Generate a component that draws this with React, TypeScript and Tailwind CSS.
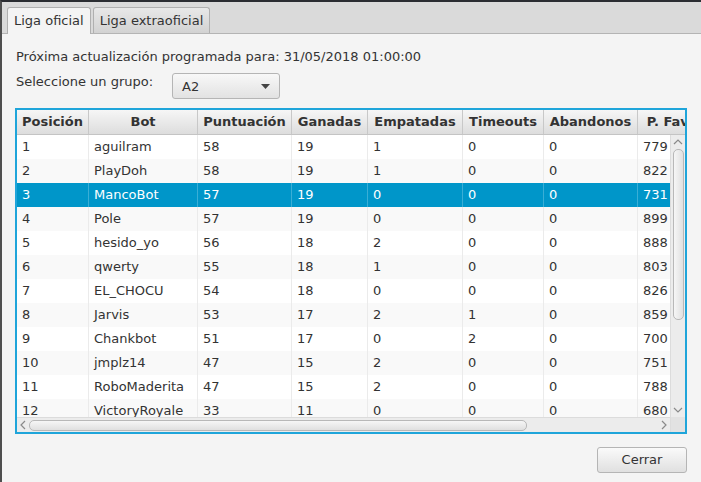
import React from 'react'

interface IFila {
  pos: number
  bot: string
  puntos: number
  ganadas: number
  empatadas: number
  timeouts: number
  abandonos: number
  favor: number
}

const filas: IFila[] = [
  { pos: 1, bot: 'aguilram', puntos: 58, ganadas: 19, empatadas: 1, timeouts: 0, abandonos: 0, favor: 779 },
  { pos: 2, bot: 'PlayDoh', puntos: 58, ganadas: 19, empatadas: 1, timeouts: 0, abandonos: 0, favor: 822 },
  { pos: 3, bot: 'MancoBot', puntos: 57, ganadas: 19, empatadas: 0, timeouts: 0, abandonos: 0, favor: 731 },
  { pos: 4, bot: 'Pole', puntos: 57, ganadas: 19, empatadas: 0, timeouts: 0, abandonos: 0, favor: 899 },
  { pos: 5, bot: 'hesido_yo', puntos: 56, ganadas: 18, empatadas: 2, timeouts: 0, abandonos: 0, favor: 888 },
  { pos: 6, bot: 'qwerty', puntos: 55, ganadas: 18, empatadas: 1, timeouts: 0, abandonos: 0, favor: 803 },
  { pos: 7, bot: 'EL_CHOCU', puntos: 54, ganadas: 18, empatadas: 0, timeouts: 0, abandonos: 0, favor: 826 },
  { pos: 8, bot: 'Jarvis', puntos: 53, ganadas: 17, empatadas: 2, timeouts: 1, abandonos: 0, favor: 859 },
  { pos: 9, bot: 'Chankbot', puntos: 51, ganadas: 17, empatadas: 0, timeouts: 2, abandonos: 0, favor: 700 },
  { pos: 10, bot: 'jmplz14', puntos: 47, ganadas: 15, empatadas: 2, timeouts: 0, abandonos: 0, favor: 751 },
  { pos: 11, bot: 'RoboMaderita', puntos: 47, ganadas: 15, empatadas: 2, timeouts: 0, abandonos: 0, favor: 788 },
  { pos: 12, bot: 'VictoryRoyale', puntos: 33, ganadas: 11, empatadas: 0, timeouts: 0, abandonos: 0, favor: 680 },
]

const columnas = [
  { titulo: 'Posición', w: 'w-[72px]' },
  { titulo: 'Bot', w: 'w-[109px]' },
  { titulo: 'Puntuación', w: 'w-[94px]' },
  { titulo: 'Ganadas', w: 'w-[76px]' },
  { titulo: 'Empatadas', w: 'w-[95px]' },
  { titulo: 'Timeouts', w: 'w-[81px]' },
  { titulo: 'Abandonos', w: 'w-[94px]' },
  { titulo: 'P. Favor', w: 'w-[76px]' },
]

const Chevron = ({ dir }: { dir: 'up' | 'down' | 'left' | 'right' }) => {
  const pts = {
    up: '1,6 5,2 9,6',
    down: '1,2 5,6 9,2',
    left: '6,1 2,5 6,9',
    right: '2,1 6,5 2,9',
  }[dir]
  const vertical = dir === 'up' || dir === 'down'
  return (
    <svg width={vertical ? 10 : 8} height={vertical ? 8 : 10} viewBox={vertical ? '0 0 10 8' : '0 0 8 10'}>
      <polyline points={pts} fill="none" stroke="#8a8a8a" strokeWidth="1.2" />
    </svg>
  )
}

const App = () => {
  const [tab, setTab] = React.useState<string>('Liga oficial')
  const [seleccion, setSeleccion] = React.useState<number>(3)

  return (
    <div className="w-[701px] h-[482px] flex flex-col bg-[#f4f4f4] border-t-2 border-l-2 border-t-[#2b2d32] border-l-[#4e4e4e] text-[13px] text-[#333333] font-['DejaVu_Sans',sans-serif] overflow-hidden">
      {/* pestañas */}
      <div className="h-[32px] shrink-0 flex items-end pl-[5px] gap-[2px] bg-[#dadada] border-b border-[#b4b4b4]">
        {['Liga oficial', 'Liga extraoficial'].map((t) => (
          <div
            key={t}
            onClick={() => setTab(t)}
            className={`h-[26px] px-[6px] flex items-center rounded-t-[3px] border border-b-0 border-[#b0b0b0] cursor-pointer -mb-px ${
              tab === t ? 'bg-[#f4f4f4] h-[27px]' : 'bg-gradient-to-b from-[#e8e8e8] to-[#d2d2d2] mb-0'
            }`}
          >
            {t}
          </div>
        ))}
      </div>

      <div className="flex-1 flex flex-col pl-[14px] pr-[14px]">
        <p className="mt-[15px] leading-[16px]">Próxima actualización programada para: 31/05/2018 01:00:00</p>

        <div className="flex items-start mt-[8px]">
          <span className="w-[156px] mt-[1px] leading-[16px]">Seleccione un grupo:</span>
          <div className="w-[108px] h-[26px] flex items-center justify-between pl-[9px] pr-[9px] rounded-[3px] border border-[#b5b5b5] bg-gradient-to-b from-[#f8f8f8] to-[#e2e2e2]">
            <span className="pt-[2px]">A2</span>
            <svg width="9" height="5" viewBox="0 0 9 5">
              <polygon points="0,0 9,0 4.5,5" fill="#444444" />
            </svg>
          </div>
        </div>

        {/* tabla */}
        <div className="mt-[9px] -ml-px w-[672px] h-[326px] border-2 border-[#1fa5da] flex flex-col bg-white">
          <div className="h-[25px] shrink-0 flex overflow-hidden bg-gradient-to-b from-[#f6f6f6] to-[#dddddd] border-b border-[#c4c4c4]">
            {columnas.map((c) => (
              <div
                key={c.titulo}
                className={`${c.w} shrink-0 flex items-center justify-center font-bold border-r border-[#c8c8c8] whitespace-nowrap`}
              >
                {c.titulo}
              </div>
            ))}
          </div>

          <div className="flex-1 flex min-h-0">
            <div className="flex-1 flex flex-col min-w-0">
              <div className="flex-1 overflow-hidden">
                {filas.map((f, i) => {
                  const sel = f.pos === seleccion
                  const valores = [f.pos, f.bot, f.puntos, f.ganadas, f.empatadas, f.timeouts, f.abandonos, f.favor]
                  return (
                    <div
                      key={f.pos}
                      onClick={() => setSeleccion(f.pos)}
                      className={`h-[24px] flex ${
                        sel ? 'bg-[#0096c9] text-white' : i % 2 === 0 ? 'bg-white' : 'bg-[#f9f9f9]'
                      }`}
                    >
                      {valores.map((v, j) => (
                        <div
                          key={j}
                          className={`${columnas[j].w} shrink-0 flex items-center pl-[5px] border-r whitespace-nowrap ${
                            sel ? 'border-[#3aaed6]' : 'border-[#ebebeb]'
                          }`}
                        >
                          {v}
                        </div>
                      ))}
                    </div>
                  )
                })}
              </div>
              {/* barra horizontal */}
              <div className="h-[15px] shrink-0 flex items-center bg-[#ececec] border-t border-[#dcdcdc]">
                <div className="w-[12px] flex justify-center">
                  <Chevron dir="left" />
                </div>
                <div className="w-[498px] h-[11px] rounded-[5px] border border-[#b8b8b8] bg-gradient-to-b from-[#f6f6f6] to-[#e0e0e0]" />
                <div className="flex-1" />
                <div className="w-[12px] flex justify-center">
                  <Chevron dir="right" />
                </div>
              </div>
            </div>

            {/* barra vertical */}
            <div className="w-[15px] shrink-0 flex flex-col bg-[#ececec] border-l border-[#dcdcdc]">
              <div className="flex-1 flex flex-col items-center">
                <div className="h-[14px] flex items-center">
                  <Chevron dir="up" />
                </div>
                <div className="w-[11px] h-[171px] rounded-[5px] border border-[#b8b8b8] bg-gradient-to-r from-[#f6f6f6] to-[#e0e0e0]" />
                <div className="flex-1" />
                <div className="h-[14px] flex items-center">
                  <Chevron dir="down" />
                </div>
              </div>
              <div className="h-[15px] shrink-0 bg-[#e2e2e2]" />
            </div>
          </div>
        </div>

        <div className="flex justify-end mt-[13px]">
          <button className="w-[90px] h-[26px] rounded-[3px] border border-[#b5b5b5] bg-gradient-to-b from-[#fafafa] to-[#e0e0e0] text-[#333333]">
            Cerrar
          </button>
        </div>
      </div>
    </div>
  )
}

export default App
